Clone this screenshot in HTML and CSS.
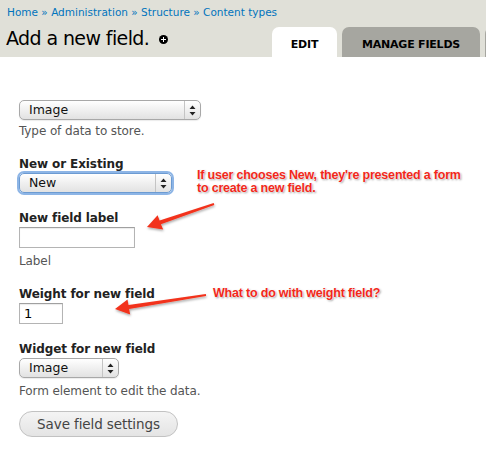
FILE: index.html
```html
<!DOCTYPE html>
<html>
<head>
<meta charset="utf-8">
<link rel="stylesheet" href="styles.css">
</head>
<body>
<div class="page">
  <header class="header">
    <nav class="crumbs">
      <a href="#">Home</a> » <a href="#">Administration</a> » <a href="#">Structure</a> » <a href="#">Content types</a>
    </nav>
    <div class="title-row">
      <h1 class="title">Add a new field. <span class="plus"></span></h1>
      <ul class="tabs">
        <li class="tab active">EDIT</li>
        <li class="tab">MANAGE FIELDS</li>
        <li class="tab"></li>
      </ul>
    </div>
  </header>
  <main class="form">
    <div class="group first">
      <div class="select wide"><span class="sel-text">Image</span><span class="sel-arrows"><svg width="7" height="11" viewBox="0 0 7 11"><path d="M3.5 0.5 L6.5 4 L0.5 4 Z M0.5 7 L6.5 7 L3.5 10.5 Z" fill="#222"/></svg></span></div>
      <div class="desc d-first">Type of data to store.</div>
    </div>
    <div class="group">
      <label class="label">New or Existing</label>
      <div class="select mid focus"><span class="sel-text">New</span><span class="sel-arrows"><svg width="7" height="11" viewBox="0 0 7 11"><path d="M3.5 0.5 L6.5 4 L0.5 4 Z M0.5 7 L6.5 7 L3.5 10.5 Z" fill="#222"/></svg></span></div>
    </div>
    <div class="group">
      <label class="label">New field label</label>
      <div class="input long"></div>
      <div class="desc">Label</div>
    </div>
    <div class="group">
      <label class="label">Weight for new field</label>
      <div class="input short">1</div>
    </div>
    <div class="group">
      <label class="label">Widget for new field</label>
      <div class="select narrow"><span class="sel-text">Image</span><span class="sel-arrows"><svg width="7" height="11" viewBox="0 0 7 11"><path d="M3.5 0.5 L6.5 4 L0.5 4 Z M0.5 7 L6.5 7 L3.5 10.5 Z" fill="#222"/></svg></span></div>
      <div class="desc">Form element to edit the data.</div>
    </div>
    <button class="save">Save field settings</button>
  </main>

  <div class="note note1">If user chooses New, they're presented a form<br>to create a new field.</div>
  <div class="note note2">What to do with weight field?</div>
  <svg class="arrows" width="486" height="460" viewBox="0 0 486 460">
    <defs>
      <filter id="sh" x="-20%" y="-50%" width="140%" height="200%">
        <feDropShadow dx="0.5" dy="1.5" stdDeviation="1" flood-color="#000" flood-opacity="0.35"/>
      </filter>
    </defs>
    <polygon filter="url(#sh)" fill="#f2331c" points="147,227 157.6,215.2 159.6,220.5 213.7,203.0 214.3,205.0 160.9,224.3 163.2,229.6"/>
    <polygon filter="url(#sh)" fill="#f2331c" points="115,309 127.5,299.4 128.5,304.9 205.9,294.0 206.1,296.0 129.1,308.9 130.2,314.4"/>
  </svg>
</div>
</body>
</html>
```

FILE: styles.css
```css
html, body {
  margin: 0;
  padding: 0;
  background: #fff;
}
.page {
  position: relative;
  width: 486px;
  height: 460px;
  overflow: hidden;
  font-family: "DejaVu Sans", Verdana, sans-serif;
  color: #333;
}
.header {
  background: #e0e0d8;
  height: 57px;
  display: flex;
  flex-direction: column;
  overflow: hidden;
}
.crumbs {
  font-size: 10.5px;
  padding: 5px 0 0 7px;
  height: 15px;
  line-height: 15px;
  color: #0074bd;
  white-space: nowrap;
}
.crumbs a {
  color: #0074bd;
  text-decoration: none;
}
.title-row {
  display: flex;
  align-items: flex-end;
  flex: 1;
}
.title {
  flex: 0 0 266px;
  margin: 0 0 7px 6px;
  font-weight: normal;
  font-size: 19px;
  line-height: 24px;
  color: #000;
  white-space: nowrap;
  letter-spacing: -0.6px;
  display: flex;
  align-items: center;
}
.plus {
  display: inline-block;
  width: 9px;
  height: 9px;
  border-radius: 50%;
  background: #000;
  margin-left: 10px;
  margin-top: 3px;
  position: relative;
}
.plus::before, .plus::after {
  content: "";
  position: absolute;
  background: #fff;
}
.plus::before { left: 2px; top: 4px; width: 5px; height: 1px; }
.plus::after { left: 4px; top: 2px; width: 1px; height: 5px; }
.tabs {
  list-style: none;
  margin: 0;
  padding: 0;
  display: flex;
  gap: 5px;
  flex-shrink: 0;
}
.tab {
  height: 30px;
  line-height: 35px;
  border-radius: 7px 7px 0 0;
  background: #a6a6a0;
  color: #000;
  font-weight: bold;
  font-size: 11px;
  text-align: center;
  width: 138px;
  letter-spacing: -0.2px;
  flex-shrink: 0;
}
.tab.active {
  background: #fff;
  width: 65px;
}
.form {
  padding: 43px 0 0 19px;
}
.group {
  margin-top: 17px;
}
.group.first {
  margin-top: 0;
}
.label {
  display: block;
  font-weight: bold;
  font-size: 12px;
  line-height: 16px;
  color: #222;
  letter-spacing: -0.1px;
  margin-bottom: 1px;
}
.desc {
  font-size: 12px;
  line-height: 16px;
  color: #555;
  margin-top: 5px;
  letter-spacing: -0.1px;
}
.desc.d-first {
  margin-top: 3px;
}
.select {
  box-sizing: border-box;
  height: 20px;
  border: 1px solid #a8a8a8;
  border-radius: 5px;
  background: linear-gradient(#ffffff, #f0f0f0 50%, #e2e2e2);
  display: flex;
  align-items: stretch;
  font-size: 12.5px;
  color: #111;
  box-shadow: 0 1px 1px rgba(0,0,0,0.08);
}
.select.wide { width: 182px; }
.select.mid { width: 153px; }
.select.narrow { width: 100px; }
.select.focus {
  border-color: #6c9bd2;
  box-shadow: 0 0 0 2px #8db5e6;
}
.sel-text {
  flex: 1;
  padding-left: 9px;
  line-height: 18px;
}
.sel-arrows {
  width: 16px;
  border-left: 1px solid #c4c4c4;
  display: flex;
  align-items: center;
  justify-content: center;
  box-sizing: border-box;
}
.input {
  box-sizing: border-box;
  height: 21px;
  border: 1px solid #b4b4b4;
  border-top-color: #a0a0a0;
  box-shadow: inset 0 1px 1px rgba(0,0,0,0.08);
  background: #fff;
  font-size: 13px;
  line-height: 19px;
  padding-left: 4px;
  color: #000;
}
.input.long { width: 116px; }
.input.short { width: 44px; }
.save {
  display: block;
  margin-top: 12px;
  width: 159px;
  height: 26px;
  border: 1px solid #c2c2c2;
  border-radius: 13px;
  background: linear-gradient(#f4f4f4, #e4e4e4);
  font-family: "DejaVu Sans", Verdana, sans-serif;
  font-size: 13.5px;
  color: #444;
  padding: 0;
  letter-spacing: -0.1px;
}
.note {
  position: absolute;
  font-family: "Liberation Sans", Arial, sans-serif;
  font-weight: bold;
  font-size: 12.5px;
  line-height: 13px;
  color: #f2281a;
  text-shadow: 0 0 2px #fff, 0 0 2px #fff, 1px 1px 2px rgba(0,0,0,0.45);
  white-space: nowrap;
  letter-spacing: -0.2px;
}
.note1 { left: 197px; top: 169px; }
.note2 { left: 213px; top: 287px; }
.arrows {
  position: absolute;
  left: 0;
  top: 0;
  pointer-events: none;
}
```
